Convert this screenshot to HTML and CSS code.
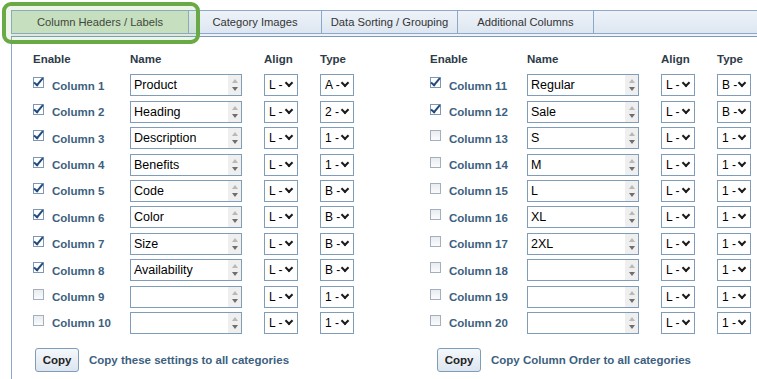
FILE: index.html
```html
<!DOCTYPE html>
<html lang="en">
<head>
    <meta charset="UTF-8">
    <title>Column settings</title>
    <link rel="stylesheet" href="styles.css">
</head>
<body>
<div class="tabs">
    <div class="tab-row">
        <div class="tab tab-wide active">Column Headers / Labels</div>
        <div class="tab tab-mid">Category Images</div>
        <div class="tab tab-std">Data Sorting / Grouping</div>
        <div class="tab tab-std">Additional Columns</div>
        <div class="tab-fill"></div>
    </div>
</div>

<div class="panel">
    <div class="half">
        <div class="grid">
            <div class="head">Enable</div>
            <div class="head">Name</div>
            <div class="head">Align</div>
            <div class="head">Type</div>

            <div class="label"><span class="cb on"></span>Column 1</div>
            <div class="name"><span class="val">Product</span><span class="spin"></span></div>
            <div class="sel"><span class="txt">L -</span></div>
            <div class="sel"><span class="txt">A -</span></div>

            <div class="label"><span class="cb on"></span>Column 2</div>
            <div class="name"><span class="val">Heading</span><span class="spin"></span></div>
            <div class="sel"><span class="txt">L -</span></div>
            <div class="sel"><span class="txt">2 -</span></div>

            <div class="label"><span class="cb on"></span>Column 3</div>
            <div class="name"><span class="val">Description</span><span class="spin"></span></div>
            <div class="sel"><span class="txt">L -</span></div>
            <div class="sel"><span class="txt">1 -</span></div>

            <div class="label"><span class="cb on"></span>Column 4</div>
            <div class="name"><span class="val">Benefits</span><span class="spin"></span></div>
            <div class="sel"><span class="txt">L -</span></div>
            <div class="sel"><span class="txt">1 -</span></div>

            <div class="label"><span class="cb on"></span>Column 5</div>
            <div class="name"><span class="val">Code</span><span class="spin"></span></div>
            <div class="sel"><span class="txt">L -</span></div>
            <div class="sel"><span class="txt">B -</span></div>

            <div class="label"><span class="cb on"></span>Column 6</div>
            <div class="name"><span class="val">Color</span><span class="spin"></span></div>
            <div class="sel"><span class="txt">L -</span></div>
            <div class="sel"><span class="txt">B -</span></div>

            <div class="label"><span class="cb on"></span>Column 7</div>
            <div class="name"><span class="val">Size</span><span class="spin"></span></div>
            <div class="sel"><span class="txt">L -</span></div>
            <div class="sel"><span class="txt">B -</span></div>

            <div class="label"><span class="cb on"></span>Column 8</div>
            <div class="name"><span class="val">Availability</span><span class="spin"></span></div>
            <div class="sel"><span class="txt">L -</span></div>
            <div class="sel"><span class="txt">B -</span></div>

            <div class="label"><span class="cb"></span>Column 9</div>
            <div class="name"><span class="val"></span><span class="spin"></span></div>
            <div class="sel"><span class="txt">L -</span></div>
            <div class="sel"><span class="txt">1 -</span></div>

            <div class="label"><span class="cb"></span>Column 10</div>
            <div class="name"><span class="val"></span><span class="spin"></span></div>
            <div class="sel"><span class="txt">L -</span></div>
            <div class="sel"><span class="txt">1 -</span></div>
        </div>
        <div class="copy">
            <button class="copy-btn">Copy</button>
            <span>Copy these settings to all categories</span>
        </div>
    </div>

    <div class="half half-right">
        <div class="grid">
            <div class="head">Enable</div>
            <div class="head">Name</div>
            <div class="head">Align</div>
            <div class="head">Type</div>

            <div class="label"><span class="cb on"></span>Column 11</div>
            <div class="name"><span class="val">Regular</span><span class="spin"></span></div>
            <div class="sel"><span class="txt">L -</span></div>
            <div class="sel"><span class="txt">B -</span></div>

            <div class="label"><span class="cb on"></span>Column 12</div>
            <div class="name"><span class="val">Sale</span><span class="spin"></span></div>
            <div class="sel"><span class="txt">L -</span></div>
            <div class="sel"><span class="txt">B -</span></div>

            <div class="label"><span class="cb"></span>Column 13</div>
            <div class="name"><span class="val">S</span><span class="spin"></span></div>
            <div class="sel"><span class="txt">L -</span></div>
            <div class="sel"><span class="txt">1 -</span></div>

            <div class="label"><span class="cb"></span>Column 14</div>
            <div class="name"><span class="val">M</span><span class="spin"></span></div>
            <div class="sel"><span class="txt">L -</span></div>
            <div class="sel"><span class="txt">1 -</span></div>

            <div class="label"><span class="cb"></span>Column 15</div>
            <div class="name"><span class="val">L</span><span class="spin"></span></div>
            <div class="sel"><span class="txt">L -</span></div>
            <div class="sel"><span class="txt">1 -</span></div>

            <div class="label"><span class="cb"></span>Column 16</div>
            <div class="name"><span class="val">XL</span><span class="spin"></span></div>
            <div class="sel"><span class="txt">L -</span></div>
            <div class="sel"><span class="txt">1 -</span></div>

            <div class="label"><span class="cb"></span>Column 17</div>
            <div class="name"><span class="val">2XL</span><span class="spin"></span></div>
            <div class="sel"><span class="txt">L -</span></div>
            <div class="sel"><span class="txt">1 -</span></div>

            <div class="label"><span class="cb"></span>Column 18</div>
            <div class="name"><span class="val"></span><span class="spin"></span></div>
            <div class="sel"><span class="txt">L -</span></div>
            <div class="sel"><span class="txt">1 -</span></div>

            <div class="label"><span class="cb"></span>Column 19</div>
            <div class="name"><span class="val"></span><span class="spin"></span></div>
            <div class="sel"><span class="txt">L -</span></div>
            <div class="sel"><span class="txt">1 -</span></div>

            <div class="label"><span class="cb"></span>Column 20</div>
            <div class="name"><span class="val"></span><span class="spin"></span></div>
            <div class="sel"><span class="txt">L -</span></div>
            <div class="sel"><span class="txt">1 -</span></div>
        </div>
        <div class="copy copy-right">
            <button class="copy-btn">Copy</button>
            <span>Copy Column Order to all categories</span>
        </div>
    </div>
</div>
</body>
</html>
```

FILE: styles.css
```css
body {
    margin: 0;
    font-family: "Liberation Sans", Arial, sans-serif;
    font-size: 12px;
    color: #333;
    background: #fff;
    overflow: hidden;
}

/* tab strip */
.tabs {
    margin: 10px 0 0 11px;
    padding-bottom: 2px;
    border-bottom: 1px solid #7b99bf;
    background: #eef3f9;
}

.tab-row {
    display: flex;
    height: 22px;
    border: 1px solid #8ea8c8;
    border-right: 0;
    background: linear-gradient(#eef3f9, #dde6f1);
}

.tab {
    position: relative;
    flex: none;
    padding-top: 1px;
    box-sizing: border-box;
    border-right: 1px solid #8ea8c8;
    line-height: 21px;
    font-size: 11.2px;
    text-align: center;
    color: #333;
}

.tab-wide { width: 177px; }
.tab-mid { width: 133px; }
.tab-std { width: 136px; }

.tab-fill {
    flex: auto;
}

.tab.active {
    background: #d3e5cf;
}

.tab.active:after {
    content: "";
    position: absolute;
    left: -10px;
    top: -9px;
    width: 198px;
    height: 42px;
    box-sizing: border-box;
    border: 4px solid #6aaa46;
    border-radius: 9px;
    background: rgba(130, 190, 100, 0.15);
    pointer-events: none;
}

/* panel */
.panel {
    display: flex;
    margin-left: 11px;
    padding: 14px 0 0 21px;
    border-left: 1px solid #8ea8c8;
    min-height: calc(100vh - 37px);
    box-sizing: border-box;
}

.half {
    width: 397px;
    flex: none;
}

.half-right {
    width: auto;
    flex: auto;
    min-width: 0;
}

.grid {
    display: grid;
    grid-template-columns: 97px 134px 56px 34px;
    grid-template-rows: 19px repeat(10, 22px);
    row-gap: 4.4px;
}

.head {
    font-weight: bold;
    font-size: 11.5px;
    line-height: 16px;
    color: #2e3b48;
}

.label {
    display: flex;
    align-items: center;
    padding-top: 1px;
    font-weight: bold;
    font-size: 11.5px;
    color: #3d5f80;
}

.cb {
    position: relative;
    align-self: flex-start;
    width: 9px;
    height: 9px;
    margin: 2px 8px 0 0;
    border: 1px solid #a3afbd;
    background: linear-gradient(#e9ecf0, #fafbfc);
}

.cb.on {
    border-color: #7d97b5;
    background: #fff;
}

.cb.on:after {
    content: "";
    position: absolute;
    left: 2px;
    top: -2px;
    width: 3px;
    height: 8px;
    border-right: 2px solid #1f4a7c;
    border-bottom: 2px solid #1f4a7c;
    transform: rotate(40deg);
}

.name {
    display: flex;
    width: 112px;
    height: 22px;
    box-sizing: border-box;
    border: 1px solid #7f9db9;
    background: #fff;
}

.val {
    flex: auto;
    padding: 1px 0 0 3px;
    font-size: 12.5px;
    line-height: 19px;
    color: #000;
    overflow: hidden;
    white-space: nowrap;
}

.spin {
    flex: none;
    width: 13px;
    display: flex;
    flex-direction: column;
    align-items: center;
    justify-content: center;
    gap: 4px;
    background: #efefef;
}

.spin:before,
.spin:after {
    content: "";
    width: 0;
    height: 0;
    border-left: 3.5px solid transparent;
    border-right: 3.5px solid transparent;
}

.spin:before {
    border-bottom: 4px solid #b8b8b8;
}

.spin:after {
    border-top: 4px solid #6e6e6e;
}

.sel {
    display: flex;
    align-items: center;
    width: 34px;
    height: 22px;
    box-sizing: border-box;
    padding: 0 5px 0 4px;
    border: 1px solid #7f9db9;
    background: #fff;
    font-size: 12px;
    color: #000;
}

.sel .txt {
    flex: auto;
    overflow: hidden;
    white-space: nowrap;
}

.sel:after {
    content: "";
    flex: none;
    width: 4px;
    height: 4px;
    margin: -4px 0 0 1px;
    border-right: 2px solid #1b1b1b;
    border-bottom: 2px solid #1b1b1b;
    transform: rotate(45deg);
}

/* copy row */
.copy {
    display: flex;
    align-items: center;
    gap: 10px;
    margin-top: 14px;
    padding-left: 2px;
    font-weight: bold;
    font-size: 11.5px;
    color: #3d5f80;
}

.copy-right {
    padding-left: 7px;
}

.copy-btn {
    width: 44px;
    height: 24px;
    padding: 0;
    border: 1px solid #7f9db9;
    border-radius: 3px;
    background: linear-gradient(#f5f8fb, #dce5ef);
    font-family: "Liberation Sans", Arial, sans-serif;
    font-size: 11.5px;
    font-weight: bold;
    color: #222;
}
```
